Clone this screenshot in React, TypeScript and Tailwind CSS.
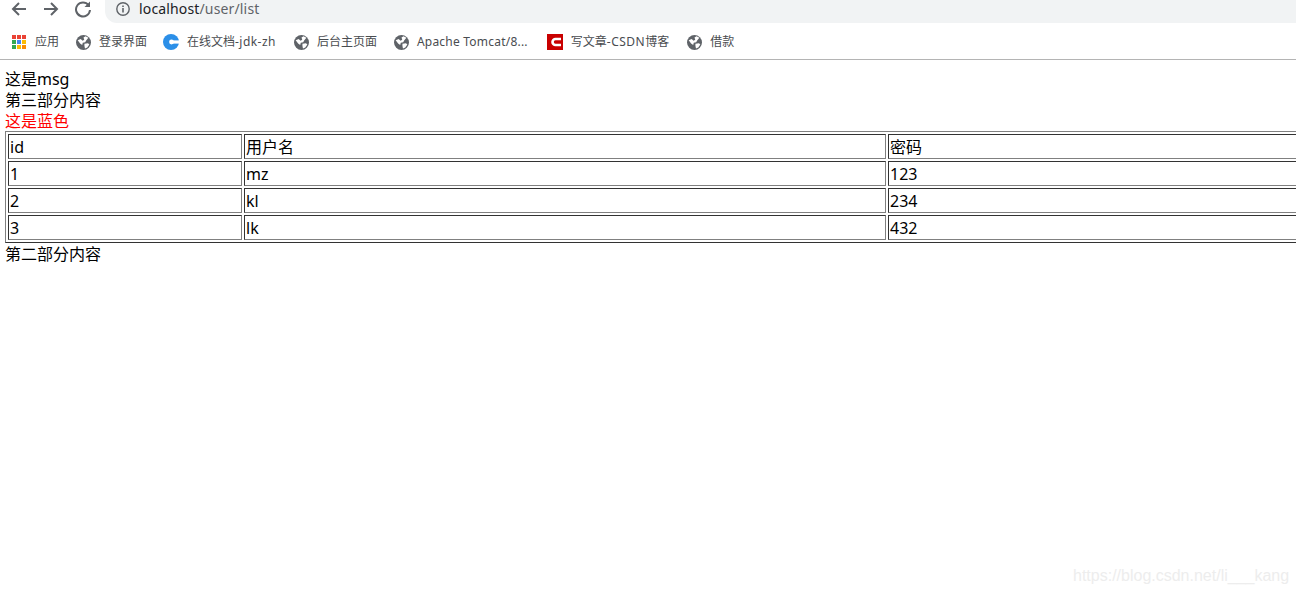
const stack = "font-['Noto_Sans','Noto_Sans_CJK_SC',sans-serif]";

function Globe() {
  return (
    <svg viewBox="0 0 16 16" className="h-[15px] w-[15px] shrink-0">
      <circle cx="8" cy="8" r="8" fill="#5f6368" />
      <path d="M1.8 5.6 5 4.2 7 6 8.8 5 8 2.6 10.2 1.2 13.2 3 11 5.6 9.8 7.6 7.2 8.2 6.6 10.6 4.4 9Z" fill="#fff" />
      <path d="M9 9.4 12.8 8.8 14.2 10.2 12 13.4 9.6 14.4 9 11.8Z" fill="#fff" />
    </svg>
  );
}

function Apps() {
  const colors = ["#ea4335", "#ea4335", "#ea4335", "#34a853", "#4285f4", "#fbbc05", "#34a853", "#fbbc05", "#fb8c05"];
  return (
    <div className="grid h-[14px] w-[14px] shrink-0 grid-cols-3 gap-[1px]">
      {colors.map((c, i) => (
        <span key={i} className="h-[4px] w-[4px]" style={{ background: c }} />
      ))}
    </div>
  );
}

function Bookmark({ icon, children, className }: { icon: React.ReactNode; children: React.ReactNode; className: string }) {
  return (
    <div className={`flex shrink-0 items-center ${className}`}>
      {icon}
      <span className="whitespace-nowrap text-[12px] leading-[16px] text-[#494c50]">{children}</span>
    </div>
  );
}

const rows = [
  ["id", "用户名", "密码"],
  ["1", "mz", "123"],
  ["2", "kl", "234"],
  ["3", "lk", "432"],
];

export default function App() {
  return (
    <div className={`relative h-[594px] w-[1296px] overflow-hidden bg-white text-black ${stack}`}>
      <header className="h-[60px] border-b border-[#b4b4b4]">
        <div className="flex h-[23px] items-start">
          <div className="ml-[10px] flex h-[18px] items-center gap-[14px] text-[#5f6368]">
            <svg viewBox="0 0 18 18" className="h-[18px] w-[18px]" fill="none" stroke="currentColor" strokeWidth="2">
              <path d="M16 9H3M9 3 3 9l6 6" />
            </svg>
            <svg viewBox="0 0 18 18" className="h-[18px] w-[18px]" fill="none" stroke="currentColor" strokeWidth="2">
              <path d="M2 9h13M9 3l6 6-6 6" />
            </svg>
            <svg viewBox="0 0 18 18" className="h-[18px] w-[18px]" fill="none" stroke="currentColor" strokeWidth="2">
              <path d="M14.6 5.2A7 7 0 1 0 16 10" />
              <path d="M16 1.5V7h-5.5Z" fill="currentColor" stroke="none" />
            </svg>
          </div>
          <div className="ml-[13px] flex h-[23px] flex-1 items-center rounded-bl-[12px] bg-[#f1f3f4] pl-[11px]">
            <svg viewBox="0 0 14 14" className="mb-[5px] h-[14px] w-[14px] text-[#5f6368]" fill="none" stroke="currentColor">
              <circle cx="7" cy="7" r="6.2" strokeWidth="1.4" />
              <path d="M7 6v4.4M7 3.4v1.5" strokeWidth="1.6" />
            </svg>
            <span className="mb-[5px] ml-[9px] text-[14px] leading-[18px] tracking-[0.15px] text-[#202124]">
              localhost<span className="text-[#5f6368]">/user/list</span>
            </span>
          </div>
        </div>
        <div className="flex h-[36px] items-center pl-[12px] pt-[2px]">
          <Bookmark className="mr-[17px] gap-[9px]" icon={<Apps />}>应用</Bookmark>
          <Bookmark className="mr-[16px] gap-[8px]" icon={<Globe />}>登录界面</Bookmark>
          <Bookmark
            className="mr-[18px] gap-[8px]"
            icon={
              <svg viewBox="0 0 16 16" className="h-[16px] w-[16px] shrink-0">
                <circle cx="8" cy="8" r="8" fill="#2b8fe8" />
                <circle cx="8.5" cy="8" r="2.4" fill="#fff" />
                <rect x="8.5" y="6.4" width="7.5" height="3.2" fill="#fff" />
              </svg>
            }
          >
            在线文档<span className="tracking-[0.45px]">-jdk-zh</span>
          </Bookmark>
          <Bookmark className="mr-[17px] gap-[8px]" icon={<Globe />}>后台主页面</Bookmark>
          <Bookmark className="mr-[19px] gap-[8px]" icon={<Globe />}>
            <span className="tracking-[0.22px]">Apache Tomcat/8...</span>
          </Bookmark>
          <Bookmark
            className="mr-[18px] gap-[8px]"
            icon={
              <svg viewBox="0 0 16 16" className="h-[16px] w-[16px] shrink-0">
                <rect width="16" height="16" fill="#c90000" />
                <path d="M14 5H8.5A3 3 0 0 0 8.5 11H14" fill="none" stroke="#fff" strokeWidth="2.6" />
              </svg>
            }
          >
            写文章<span className="tracking-[0.5px]">-CSDN</span>博客
          </Bookmark>
          <Bookmark className="gap-[8px]" icon={<Globe />}>借款</Bookmark>
        </div>
      </header>

      <main className="px-[5px] pt-[9px] text-[16px] leading-[21px]">
        <div>这是msg</div>
        <div>第三部分内容</div>
        <div className="text-[#ff0000]">这是蓝色</div>
        <table className="-mt-px table-fixed w-[1420px] border-separate border-spacing-[2px] border border-t-[#808080] border-l-[#808080] border-r-[#333] border-b-[#333]">
          <colgroup>
            <col className="w-[234px]" />
            <col className="w-[642px]" />
            <col />
          </colgroup>
          <tbody>
            {rows.map((row) => (
              <tr key={row[0]}>
                {row.map((cell) => (
                  <td
                    key={cell}
                    className="border border-t-[#333] border-l-[#333] border-r-[#808080] border-b-[#808080] pb-0 pl-[1px] pr-[1px] pt-[2px] text-left"
                  >
                    {cell}
                  </td>
                ))}
              </tr>
            ))}
          </tbody>
        </table>
        <div className="mt-px">第二部分内容</div>
      </main>

      <div className="absolute left-[1073px] top-[566px] font-['Liberation_Sans',sans-serif] text-[16px] leading-[20px] text-[#ededed]">
        https://blog.csdn.net/li___kang
      </div>
    </div>
  );
}
